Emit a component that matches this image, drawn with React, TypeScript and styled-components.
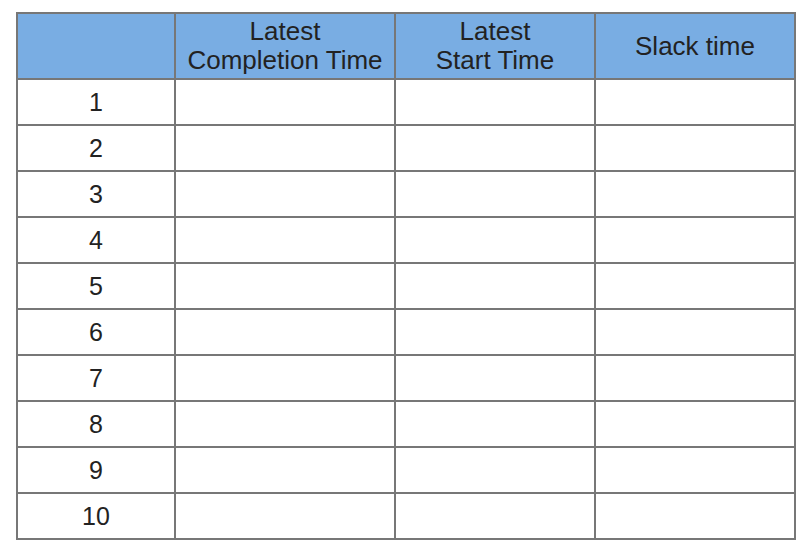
import * as React from "react";
import styled, { createGlobalStyle } from "styled-components";

const GlobalStyle = createGlobalStyle`
  html, body {
    margin: 0;
    padding: 0;
    background: #ffffff;
  }
  body {
    font-family: "Liberation Sans", Arial, sans-serif;
  }
`;

const Page = styled.div`
  padding: 12px 0 0 16px;
`;

const Table = styled.table`
  border-collapse: separate;
  border-spacing: 0;
  table-layout: fixed;
  width: 780px;
  border-left: 2px solid #777777;
  border-top: 2px solid #777777;
  font-family: "Liberation Sans", Arial, sans-serif;
  color: #222222;
`;

const HeadCell = styled.th`
  height: 64px;
  padding: 0;
  background: #79ade3;
  border-right: 2px solid #777777;
  border-bottom: 2px solid #777777;
  font-weight: 400;
  font-size: 26px;
  line-height: 29px;
  text-align: center;
  vertical-align: middle;
`;

const Cell = styled.td`
  height: 44px;
  padding: 0;
  border-right: 2px solid #777777;
  border-bottom: 2px solid #777777;
  font-size: 25px;
  text-align: center;
  vertical-align: middle;
`;

const columns = [158, 220, 200, 200];
const rows = Array.from({ length: 10 }, (_, i) => i + 1);

const App = () => {
  return (
    <Page>
      <GlobalStyle />
      <Table>
        <colgroup>
          {columns.map((w, i) => (
            <col key={i} style={{ width: w }} />
          ))}
        </colgroup>
        <thead>
          <tr>
            <HeadCell />
            <HeadCell>
              Latest
              <br />
              Completion Time
            </HeadCell>
            <HeadCell>
              Latest
              <br />
              Start Time
            </HeadCell>
            <HeadCell>Slack time</HeadCell>
          </tr>
        </thead>
        <tbody>
          {rows.map((n) => (
            <tr key={n}>
              <Cell>{n}</Cell>
              <Cell />
              <Cell />
              <Cell />
            </tr>
          ))}
        </tbody>
      </Table>
    </Page>
  );
};

export default App;
